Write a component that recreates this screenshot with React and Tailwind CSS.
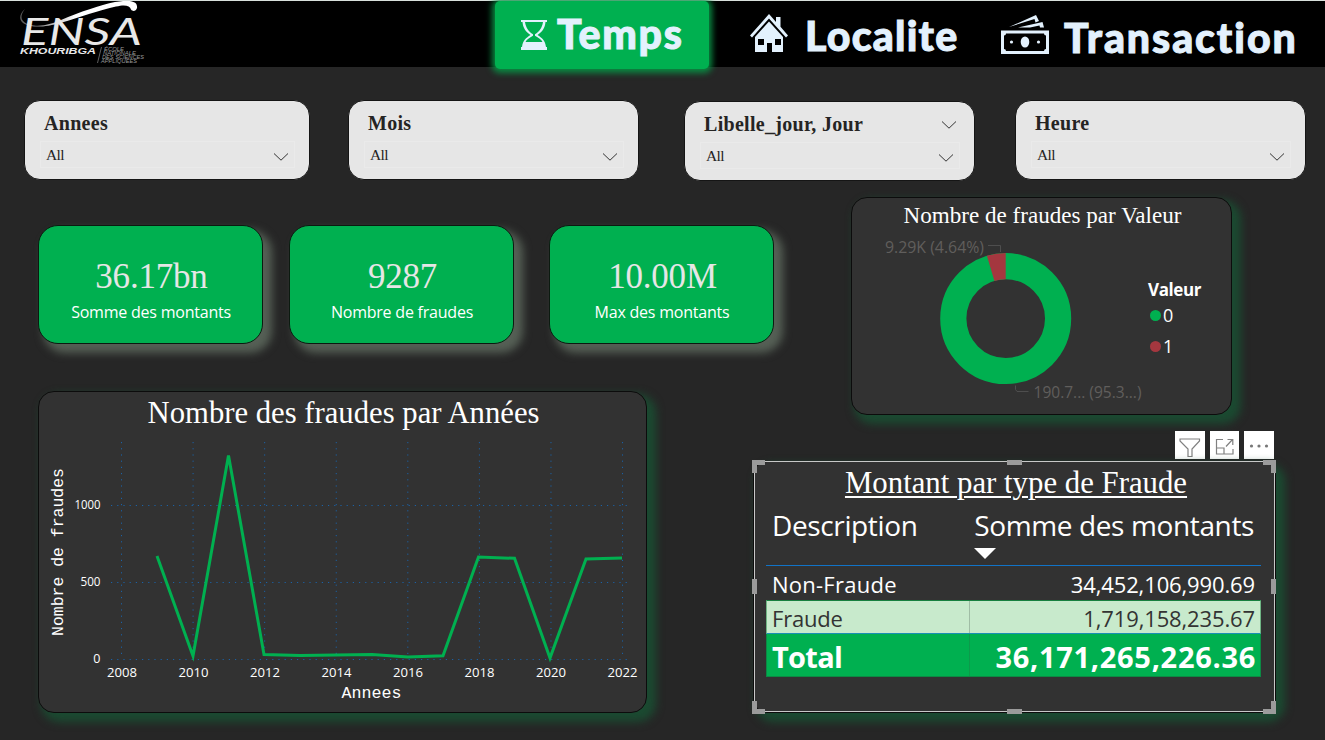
import React from "react";

const years = [2008, 2010, 2012, 2014, 2016, 2018, 2020, 2022];
const series = [
  [119, 126], [155, 226], [190.5, 25.5], [226, 224.5], [262, 225.4], [298, 225], [334, 224.6],
  [370, 227], [405, 225.7], [440.5, 127], [476.5, 128.3], [512, 228], [548, 129], [584, 128],
];

function Chevron({ className = "" }) {
  return (
    <svg width="16" height="10" viewBox="0 0 16 10" className={className} fill="none" stroke="#333" strokeWidth="1">
      <path d="M1 1.5 L8 8.2 L15 1.5" />
    </svg>
  );
}

function Filter({ label, className, open }) {
  return (
    <div className={"h-[80px] shrink-0 rounded-[16px] border border-[#151515] bg-[#e6e6e6] pl-[15px] pr-[14px] pt-[10px] text-[#252423] " + className}>
      <div className="flex h-6 items-center justify-between pl-1">
        <span className="text-[20px] leading-6 font-bold tracking-[0.3px]">{label}</span>
        {open && <Chevron className="mr-[3px] mt-px" />}
      </div>
      <div className="mt-[6px] flex h-[27px] items-center justify-between border border-[#eaeaea] pl-[5px] pr-[5px]">
        <span className="text-[15.500px] leading-[27px] tracking-[-0.6px]">All</span>
        <Chevron className="mt-1" />
      </div>
    </div>
  );
}

function Kpi({ value, label, className = "" }) {
  return (
    <div className={"flex h-[119px] w-[225px] shrink-0 flex-col items-center rounded-[20px] border border-[#0b1a10] bg-[#00b050] pt-[31px] shadow-[7px_7px_8px_2px_#566056] " + className}>
      <span className="pl-[2px] text-[35px] leading-10 tracking-[-0.2px] text-[#e6e6e6]">{value}</span>
      <span className="mt-[3px] pl-px font-['Open_Sans',sans-serif] text-[16px] leading-6 tracking-[-0.220px] text-white">{label}</span>
    </div>
  );
}

function Logo() {
  return (
    <svg width="130" height="66" viewBox="18 1 130 66" fill="none">
      <defs>
        <linearGradient id="sw" x1="20" x2="75" y1="0" y2="0" gradientUnits="userSpaceOnUse">
          <stop offset="0" stopColor="#555" />
          <stop offset="1" stopColor="#fff" />
        </linearGradient>
      </defs>
      <path d="M25 9 C19 16 20 24 34 25.500 C44 26.500 54 23 61 20 C80 12 100 5 115 2 C130 -0.500 138 1 137 8 C136 11 133 12 131 9.500 C130 5 124 4.500 116 6.500 C100 10 80 17 62 22.500 C50 26 42 27 34 26.500 C18 25 17 16 25 9Z" fill="url(#sw)" />
      <g fill="#e8e8e8" fontFamily="Lato, sans-serif" fontStyle="italic">
        <text x="21" y="45" fontSize="37" fontWeight="400" textLength="121" lengthAdjust="spacingAndGlyphs">ENSA</text>
        <text x="20" y="54" fontFamily="Liberation Sans, sans-serif" fontSize="9.500" fontWeight="700" textLength="76" lengthAdjust="spacingAndGlyphs">KHOURIBGA</text>
        <g fontFamily="Liberation Sans, sans-serif" fontSize="4.600" fill="#999">
          <text x="104" y="50.500" textLength="20" lengthAdjust="spacingAndGlyphs">ÉCOLE</text>
          <text x="103" y="54.800" textLength="33" lengthAdjust="spacingAndGlyphs">NATIONALE</text>
          <text x="102" y="59.100" textLength="42" lengthAdjust="spacingAndGlyphs">DES SCIENCES</text>
          <text x="101" y="63.400" textLength="36" lengthAdjust="spacingAndGlyphs">APPLIQUÉES</text>
        </g>
      </g>
      <path d="M101.500 47 L97.500 63" stroke="#777" strokeWidth="0.8" />
    </svg>
  );
}

function Header() {
  const word = "font-['Lato',sans-serif] text-[41px] leading-[50px] font-black text-[#e3f1fd] whitespace-nowrap [-webkit-text-stroke:1px_#e3f1fd] ";
  return (
    <header className="flex h-[67px] items-start border-t border-[#d8e0dc] bg-black">
      <div className="w-[495px] shrink-0 pl-[18px]"><Logo /></div>
      <div className="relative flex h-[68px] w-[214px] shrink-0 rounded-[5px] bg-[#00b050] pl-[26px] shadow-[0_1px_6px_3px_#0a8a42]">
        <svg width="26" height="30" viewBox="0 0 26 30" className="mt-[19px] shrink-0" fill="#e3f1fd">
          <path fillRule="evenodd" d="M0 0H26V2H24.500C24 8 21 12 16.500 15C21 18 24 20 25 27H26V30H0V27H1C2 20 5 18 9.500 15C5 12 2 8 1.500 2H0ZM4 2C5 8 7.500 11.500 12 14.200V15.800C8.500 18 5.500 19.500 4.500 22H21.500C20.500 19.500 17.500 18 14 15.800V14.200C18.500 11.500 21 8 22 2Z" />
        </svg>
        <span className={word + "ml-[10px] mt-[8px] tracking-[1.700px]"}>Temps</span>
      </div>
      <div className="flex w-[292px] shrink-0 pl-[41px]">
        <svg width="38" height="39" viewBox="0 0 38 39" className="mt-[13px] shrink-0" fill="#e3f1fd">
          <path d="M0 21.500L19 0L26 8V3H30.500V12.800L38 21.500L36 23.500L19 4.500L2 23.500Z" />
          <path fillRule="evenodd" d="M5 23L19 7.500L33 23V38H22V29H17V38H5ZM8 25V31H14V25ZM25 25V31H31V25Z" />
        </svg>
        <span className={word + "ml-[17px] mt-[10px] tracking-[1.250px]"}>Localite</span>
      </div>
      <div className="flex shrink-0">
        <svg width="48" height="39" viewBox="0 0 48 39" className="mt-[14px] shrink-0" fill="#e3f1fd">
          <path d="M8 12L35 0L38 6L34.500 7.400L33.500 4Z" />
          <path d="M17 12.500L41.500 7L43 12.500H39L38.500 10.500L29 12.500Z" />
          <path fillRule="evenodd" d="M0 15.500H48V39H0ZM5 18.500Q5 20.500 3 20.500V34Q5 34 5 36H43Q43 34 45 34V20.500Q43 20.500 43 18.500Z" />
          <ellipse cx="24" cy="27" rx="4.300" ry="5.500" />
          <circle cx="10.500" cy="27" r="1.600" />
          <circle cx="37.500" cy="27" r="1.600" />
        </svg>
        <span className={word + "ml-[15px] mt-[12px] tracking-[1.950px]"}>Transaction</span>
      </div>
    </header>
  );
}

function LinePanel() {
  return (
    <section className="mt-[47px] h-[322px] w-[609px] rounded-[16px] border border-[#0c0c0c] bg-[#323232] pt-[3px] shadow-[6px_6px_8px_3px_#1b4a31]">
      <h2 className="pl-[2px] text-center text-[30.700px] leading-9 text-white">Nombre des fraudes par Années</h2>
      <svg width="607" height="281" viewBox="1 1 607 281" className="block">
        <g stroke="#1b61a5" strokeWidth="1" strokeDasharray="1.200 5">
          {years.map((y, i) => <line key={y} x1={83.5 + i * 71.58} x2={83.5 + i * 71.58} y1="12" y2="229" />)}
          {[75.5, 152.5, 229.5].map((y) => <line key={y} x1="73" x2="590" y1={y} y2={y} />)}
        </g>
        <polyline points={series.map((p) => p.join(",")).join(" ")} fill="none" stroke="#00b050" strokeWidth="3" />
        <g fill="#fff" fontFamily="Open Sans, sans-serif" fontSize="12.500">
          {years.map((y, i) => <text key={y} x={69 + i * 71.52} y="247" textLength="30" lengthAdjust="spacingAndGlyphs">{y}</text>)}
          <text x="36.500" y="79" textLength="26" lengthAdjust="spacingAndGlyphs">1000</text>
          <text x="42.500" y="156" textLength="20" lengthAdjust="spacingAndGlyphs">500</text>
          <text x="62.500" y="233" textAnchor="end">0</text>
        </g>
        <g fill="#fff" fontFamily="Liberation Mono, monospace" fontSize="16">
          <text x="303.500" y="268" textLength="60" lengthAdjust="spacingAndGlyphs">Annees</text>
          <text transform="translate(25 206) rotate(-90)" textLength="168" lengthAdjust="spacingAndGlyphs">Nombre de fraudes</text>
        </g>
      </svg>
    </section>
  );
}

function DonutPanel() {
  return (
    <section className="ml-[98px] h-[218px] w-[381px] rounded-[16px] border border-[#0c0c0c] bg-[#323232] pt-[3px] shadow-[6px_6px_8px_3px_#1b4a31]">
      <h2 className="pl-[2px] text-center text-[23.100px] leading-7 text-white">Nombre de fraudes par Valeur</h2>
      <div className="flex font-['Open_Sans',sans-serif]">
        <svg width="292" height="180" viewBox="852 229 292 180" className="shrink-0">
          <circle cx="1005.700" cy="318.600" r="52.400" fill="none" stroke="#00b050" strokeWidth="26.200" />
          <path d="M1005.700 253.100 A65.500 65.500 0 0 0 986.900 255.860 L994.400 280.960 A39.300 39.300 0 0 1 1005.700 279.300Z" fill="#a4373f" />
          <g fill="none" stroke="#4e4e4e">
            <path d="M988 245.500H1000.500V252" />
            <path d="M1015.500 385.500V389.500L1017 391.500H1028.500" />
          </g>
          <g fill="#605e5c" fontSize="16">
            <text x="885" y="253" textLength="99" lengthAdjust="spacingAndGlyphs">9.29K (4.64%)</text>
            <text x="1033.500" y="398" textLength="108" lengthAdjust="spacingAndGlyphs">190.7... (95.3...)</text>
          </g>
        </svg>
        <div className="pl-1 pt-[49px] text-white">
          <div className="text-[17px] leading-6 font-bold tracking-[-0.400px]">Valeur</div>
          <div className="mt-px flex h-[24px] items-center gap-[2px] pl-[2px] text-[18px]"><span className="size-[11px] rounded-full bg-[#00b050]" />0</div>
          <div className="mt-[7px] flex h-[24px] items-center gap-[2px] pl-[2px] text-[18px]"><span className="size-[11px] rounded-full bg-[#a4373f]" />1</div>
        </div>
      </div>
    </section>
  );
}

function Toolbar() {
  const box = "flex h-[28px] items-center justify-center bg-white ";
  return (
    <div className="relative mt-[16px] flex justify-end gap-[5px] pr-[3px]">
      <div className={box + "w-[30px]"}>
        <svg width="22" height="20" viewBox="0 0 22 20" fill="none" stroke="#808080" strokeWidth="1.200" className="mt-[6px]"><path d="M1 1H20.500V3L13 11V18.500H9V11L1 3Z" /></svg>
      </div>
      <div className={box + "w-[29px]"}>
        <svg width="20" height="18" viewBox="0 0 20 18" fill="none" stroke="#808080" strokeWidth="1.200" className="mt-1"><path d="M8 1.500H1.500V16H18V11M1.500 10H9V16M11 8.500L17.500 1.500M12.500 1.500H17.800V7" /></svg>
      </div>
      <div className={box + "w-[30px]"}>
        <svg width="20" height="4" viewBox="0 0 20 4" fill="#777" className="mt-[2px]"><circle cx="2.500" cy="2" r="1.600" /><circle cx="10" cy="2" r="1.600" /><circle cx="17.500" cy="2" r="1.600" /></svg>
      </div>
    </div>
  );
}

function Selection() {
  const h = "absolute bg-[#9b9b9b] ";
  const c = "absolute size-[13px] border-[#9b9b9b] ";
  return (
    <div className="pointer-events-none absolute -top-px left-0 h-[251px] w-[521px] border border-[#c8c8c8]">
      <i className={c + "-left-[3px] -top-[2px] border-l-[5px] border-t-[5px]"} />
      <i className={c + "-right-[2px] -top-[2px] border-r-[5px] border-t-[5px]"} />
      <i className={c + "-left-[3px] -bottom-[3px] border-l-[5px] border-b-[5px]"} />
      <i className={c + "-right-[2px] -bottom-[3px] border-r-[5px] border-b-[5px]"} />
      <i className={h + "left-[252px] -top-[2px] h-[5px] w-[15px]"} />
      <i className={h + "left-[252px] -bottom-[3px] h-[5px] w-[15px]"} />
      <i className={h + "-left-[3px] top-[117px] h-[15px] w-[5px]"} />
      <i className={h + "-right-[2px] top-[117px] h-[15px] w-[5px]"} />
    </div>
  );
}

function TablePanel() {
  return (
    <section className="relative mt-[2px] h-[252px] w-[523px] rounded-[14px] border border-[#0c0c0c] bg-[#323232] pl-[12px] pr-[14px] pt-[3px] shadow-[6px_6px_8px_3px_#1b4a31]">
      <h2 className="pl-[5px] text-center text-[30.800px] leading-9 text-white underline decoration-2 underline-offset-[3px]">Montant par type de Fraude</h2>
      <div className="font-['Open_Sans',sans-serif] text-white">
        <div className="flex h-[65px] justify-between border-b border-[#1173c7] pl-[6px] pr-[7px] pt-[4px] text-[28px] leading-[40px] tracking-[-0.370px]">
          <span>Description</span>
          <div>
            <div>Somme des montants</div>
            <svg width="22" height="11" viewBox="0 0 22 11" className="mt-[3px] block"><path d="M0 0H22L11 11Z" fill="#fff" /></svg>
          </div>
        </div>
        <div className="flex h-[34px] justify-between px-[6px] text-[22px] leading-[37px]">
          <span className="tracking-[0.250px]">Non-Fraude</span><span className="tracking-[-0.130px]">34,452,106,990.69</span>
        </div>
        <div className="flex h-[34px] border border-b-[#1a8fb5] border-t-[#17803f] border-x-[#6fb584] bg-[#c8eacc] text-[22px] leading-[35px] text-[#333]">
          <span className="w-[203px] border-r border-[#a0bda5] pl-[5px] tracking-[-0.200px]">Fraude</span>
          <span className="flex-1 pr-[5px] text-right tracking-[-0.130px]">1,719,158,235.67</span>
        </div>
        <div className="flex h-[43px] border border-t-0 border-[#0c8a44] bg-[#00b050] text-[29px] leading-[46px] font-bold">
          <span className="w-[203px] border-r border-[#0c9a4b] pl-[5px] tracking-[-0.700px]">Total</span>
          <span className="flex-1 pr-[4px] text-right tracking-[0.700px]">36,171,265,226.36</span>
        </div>
      </div>
      <Selection />
    </section>
  );
}

export default function App() {
  return (
    <div className="h-[740px] w-[1325px] overflow-hidden bg-[#262626] font-['Liberation_Serif',serif]">
      <Header />
      <div className="flex pl-[24px] pt-[33px]">
        <Filter label="Annees" className="w-[286px]" />
        <Filter label="Mois" className="ml-[38px] w-[291px]" />
        <Filter label="Libelle_jour, Jour" className="ml-[45px] mt-px w-[291px]" open />
        <Filter label="Heure" className="ml-[40px] w-[291px]" />
      </div>
      <main className="flex pl-[38px]">
        <div className="w-[715px] shrink-0 pt-[44px]">
          <div className="flex">
            <Kpi value="36.17bn" label="Somme des montants" />
            <Kpi value="9287" label="Nombre de fraudes" className="ml-[26px]" />
            <Kpi value="10.00M" label="Max des montants" className="ml-[35px]" />
          </div>
          <LinePanel />
        </div>
        <div className="w-[524px] shrink-0 pt-[16px]">
          <DonutPanel />
          <Toolbar />
          <TablePanel />
        </div>
      </main>
    </div>
  );
}
